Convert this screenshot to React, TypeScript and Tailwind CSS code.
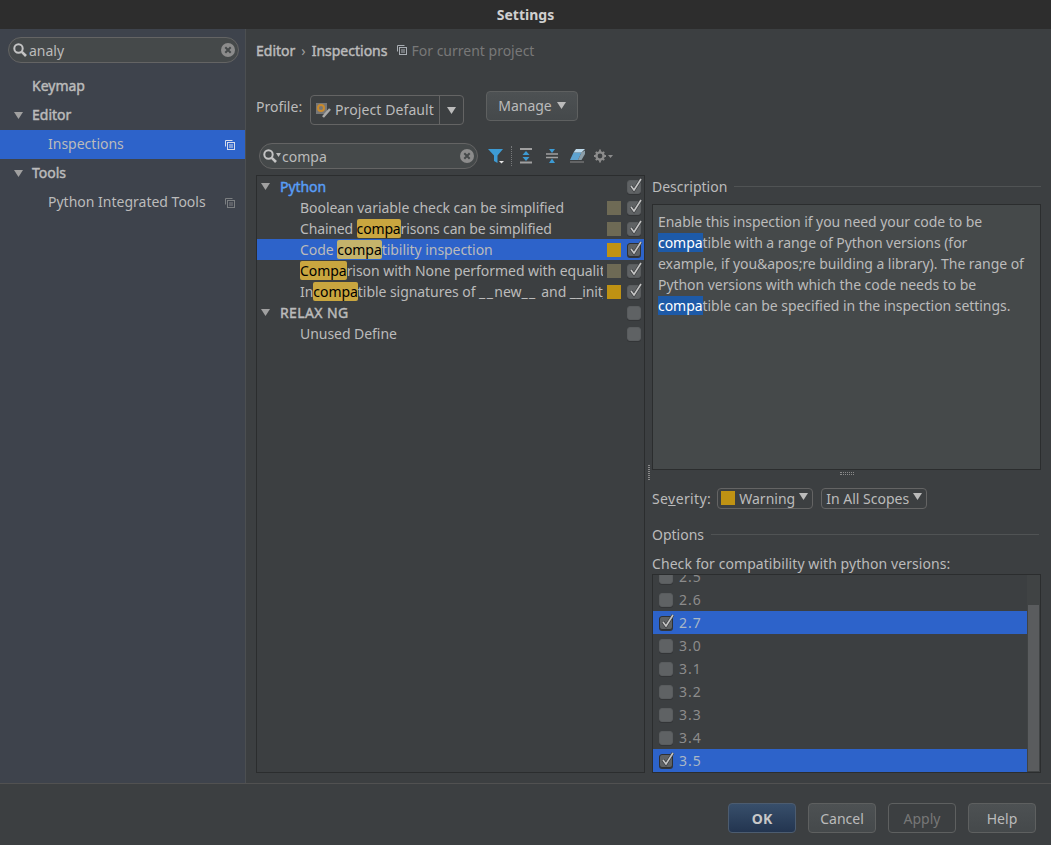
import { ReactNode } from 'react'

const fauxBold = '[-webkit-text-stroke:0.45px_currentColor]'

function Tri({ className = '' }: { className?: string }) {
  return (
    <svg width="9" height="7" viewBox="0 0 9 7" className={className}>
      <path d="M0 0h9L4.5 7z" fill="currentColor" />
    </svg>
  )
}

function SearchGlass() {
  return (
    <svg width="14" height="14" viewBox="0 0 14 14" fill="none" stroke="#c4c4c4" className="shrink-0">
      <circle cx="5.5" cy="5.5" r="4.2" strokeWidth="2" />
      <path d="M8.8 8.8l4.2 4.2" strokeWidth="2.6" />
    </svg>
  )
}

function ClearIcon() {
  return (
    <svg width="14" height="14" viewBox="0 0 14 14" className="shrink-0">
      <circle cx="7" cy="7" r="7" fill="#8c8c8c" />
      <path d="M4.3 4.3l5.4 5.4M9.7 4.3l-5.4 5.4" stroke="#45494a" strokeWidth="2" />
    </svg>
  )
}

function CopyIcon({ color }: { color: string }) {
  return (
    <svg width="10" height="10" viewBox="0 0 10 10" fill="none" stroke={color} className="shrink-0">
      <path d="M7.5 .5h-7v6" />
      <rect x="2.5" y="2.5" width="7" height="7" />
      <path d="M4 5h4M4 7h4" />
    </svg>
  )
}

function Check({ on, dark }: { on?: boolean; dark?: boolean }) {
  return (
    <span className={`relative block w-[14px] h-[14px] rounded-[3px] bg-[#5f6264] border ${dark ? 'border-[#2f3133]' : 'border-[#595c5e]'} shadow-[0_1px_0_#333537] shrink-0`}>
      {on && (
        <svg width="16" height="16" viewBox="0 0 16 16" fill="none" className="absolute left-0 -top-[4px]">
          <path d="M3 9l3 4L13 2" stroke="#3a3c3e" strokeWidth="3" />
          <path d="M3 9l3 4L13 2" stroke="#c4c4c4" strokeWidth="1.6" />
        </svg>
      )}
    </span>
  )
}

function Hl({ children, selected }: { children: ReactNode; selected?: boolean }) {
  return (
    <span className={`rounded-[2px] text-black ${selected ? 'bg-[#c4b36b]' : 'bg-[#c9a63f]'}`}>{children}</span>
  )
}

function Under() {
  return <span className="tracking-[1.4px]">__</span>
}

function SideRow({ label, bold, open, indent, copy, selected }: { label: string; bold?: boolean; open?: boolean; indent?: boolean; copy?: string; selected?: boolean }) {
  return (
    <div className={`h-[29px] flex items-center pr-[10px] ${selected ? 'bg-[#2d63ca]' : ''}`}>
      <span className="w-[32px] pl-[14px] shrink-0">{open && <Tri className="text-[#a0a0a0]" />}</span>
      <span className={`${bold ? fauxBold : ''} ${indent ? 'ml-[16px]' : ''} flex-1 -mt-[2px]`}>{label}</span>
      {copy && <CopyIcon color={copy} />}
    </div>
  )
}

function TreeRow({ children, sev, on, group, selected }: { children: ReactNode; sev?: string; on?: boolean; group?: boolean; selected?: boolean }) {
  return (
    <div className={`h-[21px] flex items-center pr-[3px] ${selected ? 'bg-[#2d63ca]' : ''}`}>
      {group ? (
        <span className="w-[23px] pl-[4px] shrink-0"><Tri className="text-[#a0a0a0]" /></span>
      ) : (
        <span className="w-[43px] shrink-0" />
      )}
      <span className="flex-1 min-w-0 whitespace-nowrap overflow-hidden tracking-[-0.05px]">{children}</span>
      {sev && <span className="w-[14px] h-[14px] ml-[4px] shrink-0" style={{ background: sev }} />}
      <span className="ml-[6px]"><Check on={on} dark={selected} /></span>
    </div>
  )
}

function VersionRow({ v, on }: { v: string; on?: boolean }) {
  return (
    <div className={`h-[23px] flex items-center pl-[6px] gap-[6px] text-[#8c8c8c] tracking-[1px] ${on ? 'bg-[#2d63ca] text-[#a9b7c6]' : ''}`}>
      <Check on={on} dark={on} />
      <span>{v}</span>
    </div>
  )
}

function FooterButton({ label, variant }: { label: string; variant?: 'ok' | 'off' }) {
  const look =
    variant === 'ok'
      ? `bg-gradient-to-b from-[#384f6b] to-[#233550] border-[#4c5c70] font-bold text-[#c8c8c8]`
      : variant === 'off'
        ? 'border-[#5e6060] text-[#777777]'
        : 'bg-gradient-to-b from-[#4d5153] to-[#45494b] border-[#5e6060]'
  return <button className={`w-[68px] h-[30px] rounded-[4px] border ${look}`}>{label}</button>
}

function Section({ title }: { title: string }) {
  return (
    <div className="flex items-center gap-[7px]">
      <span>{title}</span>
      <span className="flex-1 h-px bg-[#505354]" />
    </div>
  )
}

function Toolbar() {
  return (
    <div className="flex items-center ml-[10px] h-[20px]">
      <svg width="16" height="16" viewBox="0 0 16 16">
        <path d="M0 1h15L9.5 7.5V15L6 13V7.5z" fill="#3d9bd4" />
        <path d="M11 13h5l-2.5 2.5z" fill="#e6e6e6" />
      </svg>
      <span className="ml-[7px] h-[20px] border-l border-dotted border-[#77797a]" />
      <svg width="14" height="16" viewBox="0 0 14 16" className="ml-[7px]">
        <path d="M1 1h12M1 14.5h12" stroke="#a0a0a0" strokeWidth="2" fill="none" />
        <path d="M7 3l3.5 4h-7zM7 13l-3.5-4h7z" fill="#3d9bd4" />
      </svg>
      <svg width="14" height="16" viewBox="0 0 14 16" className="ml-[12px]">
        <path d="M1 6h12M1 9.5h12" stroke="#a0a0a0" strokeWidth="1.6" fill="none" />
        <path d="M7 5L4 1h6zM7 10.5l3 4.5H4z" fill="#3d9bd4" />
      </svg>
      <svg width="16" height="16" viewBox="0 0 16 16" className="ml-[11px]">
        <path d="M0 12L3.5 4.5h8L8 12z" fill="#5ea3d0" />
        <path d="M8 12l3.5-7.5L15 2.5V6l-3.500 6z" fill="#8c9ea8" />
        <path d="M3.500 4.500L6 1h9l-3.500 3.500z" fill="#bcd9ec" />
        <path d="M0 14h14" stroke="#8a8a8a" strokeWidth="1" />
      </svg>
      <svg width="20" height="14" viewBox="0 0 20 14" className="ml-[8px]">
        <circle cx="6" cy="7" r="3.6" fill="none" stroke="#8c8c8c" strokeWidth="2.4" />
        <path d="M6 .5v2.500M6 11v2.500M0 7h2.500M9.500 7H12M1.800 2.800l1.800 1.800M8.400 9.400l1.800 1.800M10.200 2.800L8.400 4.600M3.600 9.400l-1.800 1.800" stroke="#8c8c8c" strokeWidth="1.8" />
        <path d="M14 6h5l-2.500 3z" fill="#8c8c8c" />
      </svg>
    </div>
  )
}

export default function App() {
  return (
    <div className="w-[1051px] h-[845px] flex flex-col overflow-hidden bg-[#3c3f41] text-[#bbbbbb] text-[14px] font-['Noto_Sans',sans-serif]">
      {/* Title bar */}
      <div className="h-[29px] shrink-0 flex items-center justify-center bg-[#2d2d2d] text-[#d0d0d0] font-bold text-[14px]">Settings</div>

      <div className="h-[755px] shrink-0 flex border-b border-[#515151]">
        {/* Sidebar */}
        <div className="w-[246px] shrink-0 bg-[#3e434c] border-r border-[#4c4f51]">
          <div className="ml-[8px] w-[231px] mt-[8px] h-[26px] rounded-[13px] bg-[#45494a] border border-[#646464] flex items-center pl-[4px] pr-[3px]">
            <SearchGlass />
            <span className="flex-1 ml-[2px]">analy</span>
            <ClearIcon />
          </div>
          <div className="mt-[9px]">
            <SideRow label="Keymap" bold />
            <SideRow label="Editor" bold open />
            <SideRow label="Inspections" indent selected copy="#d5dcec" />
            <SideRow label="Tools" bold open />
            <SideRow label="Python Integrated Tools" indent copy="#7c7f81" />
          </div>
        </div>

        {/* Main */}
        <div className="flex-1 min-w-0 pl-[10px] pr-[10px] flex flex-col">
          <div className="h-[44px] flex items-center -mt-[1px]">
            <span className={fauxBold}>Editor</span>
            <span className="mx-[6px] text-[#a0a0a0]">›</span>
            <span className={fauxBold}>Inspections</span>
            <span className="ml-[10px] mr-[4px]"><CopyIcon color="#a8adb3" /></span>
            <span className="text-[#787878]">For current project</span>
          </div>

          <div className="h-[50px] flex items-start mt-[19px]">
            <span className="mt-[5px] w-[54px]">Profile:</span>
            <div className="mt-[4px] h-[30px] w-[154px] rounded-[4px] border border-[#646464] flex items-center">
              <svg width="17" height="17" viewBox="0 0 17 17" className="ml-[4px] shrink-0">
                <rect x="1" y="1" width="11" height="11" fill="#777" />
                <circle cx="6" cy="6" r="3" fill="none" stroke="#c98a2c" strokeWidth="2" />
                <path d="M15 7l-7 8" stroke="#a8a8a8" strokeWidth="2.5" />
              </svg>
              <span className="ml-[3px] flex-1 whitespace-nowrap -mt-[1px] tracking-[0.1px]">Project Default</span>
              <span className="w-[24px] h-full border-l border-[#646464] flex items-center justify-center">
                <Tri className="text-[#bbbbbb]" />
              </span>
            </div>
            <button className="ml-[22px] w-[92px] h-[30px] rounded-[4px] border border-[#5e6060] bg-gradient-to-b from-[#4d5153] to-[#45494b] flex items-center justify-center gap-[5px]">
              <span className="-mt-[1px]">Manage</span> <Tri className="text-[#bbbbbb] -mt-[1px]" />
            </button>
          </div>

          <div className="flex items-center mt-[2px] ml-[3px] h-[26px]">
            <div className="w-[219px] h-[26px] rounded-[13px] bg-[#45494a] border border-[#646464] flex items-center pl-[3px] pr-[3px]">
              <SearchGlass />
              <svg width="5" height="4" viewBox="0 0 5 4" className="-ml-[1px] -mt-[2px] shrink-0"><path d="M0 0h5L2.500 4z" fill="#bbbbbb" /></svg>
              <span className="flex-1 ml-[1px]">compa</span>
              <ClearIcon />
            </div>
            <Toolbar />
          </div>

          <div className="flex mt-[6px] h-[598px]">
            {/* Tree */}
            <div className="w-[389px] shrink-0 border border-[#2b2d2e]">
              <TreeRow group on><span className={`${fauxBold} text-[#589df6]`}>Python</span></TreeRow>
              <TreeRow sev="#6e6a55" on>Boolean variable check can be simplified</TreeRow>
              <TreeRow sev="#6e6a55" on><span className="tracking-[-0.15px]">Chained <Hl>compa</Hl>risons can be simplified</span></TreeRow>
              <TreeRow sev="#bf9213" on selected>Code <Hl selected>compa</Hl>tibility inspection</TreeRow>
              <TreeRow sev="#6e6a55" on><Hl>Compa</Hl>rison with None performed with equality operators</TreeRow>
              <TreeRow sev="#bf9213" on>In<Hl>compa</Hl>tible signatures of <Under />new<Under /> <span className="ml-[1px]">and</span> __init__</TreeRow>
              <TreeRow group><span className={`${fauxBold} tracking-[0.4px]`}>RELAX NG</span></TreeRow>
              <TreeRow>Unused Define</TreeRow>
            </div>

            {/* Splitter */}
            <div className="w-[7px] shrink-0 flex flex-col items-center pt-[290px]">
              <span className="w-[2px] h-[15px] border-x border-dotted border-[#8a8a8a]" />
            </div>

            {/* Details */}
            <div className="flex-1 min-w-0 flex flex-col">
              <div className="h-[29px] flex flex-col justify-center pb-[6px]"><Section title="Description" /></div>
              <div className="h-[267px] bg-[#45494a] border border-[#2b2d2e] pl-[5px] pr-[10px] pt-[6px] leading-[21px] tracking-[-0.05px]">
                Enable this inspection if you need your code to be <span className="bg-[#1d5aa8] text-white">compa</span>tible with a range of Python versions (for example, if you&amp;apos;re building a library). The range of Python versions with which the code needs to be <span className="bg-[#1d5aa8] text-white">compa</span>tible can be specified in the inspection settings.
              </div>
              <div className="h-[6px] flex justify-center items-center">
                <span className="w-[14px] h-[3px] border-y border-dotted border-[#8a8a8a]" />
              </div>
              <div className="flex items-center h-[22px] mt-[11px]">
                <span className="mr-[6px] tracking-[0.4px]">Se<span className="underline">v</span>erity:</span>
                <div className="h-[21px] w-[96px] rounded-[4px] border border-[#646464] flex items-center pl-[3px]">
                  <span className="w-[14px] h-[14px] bg-[#bf9213] mr-[4px] shrink-0" />
                  Warning
                  <Tri className="text-[#bbbbbb] ml-[4px] -mt-[3px]" />
                </div>
                <div className="ml-[8px] h-[21px] w-[106px] rounded-[4px] border border-[#646464] flex items-center pl-[4px]">
                  In All Scopes
                  <Tri className="text-[#bbbbbb] ml-[4px] -mt-[3px]" />
                </div>
              </div>
              <div className="mt-[15px] h-[20px] pr-[2px]"><Section title="Options" /></div>
              <div className="mt-[10px] h-[20px] leading-[20px] tracking-[0.07px]">Check for compatibility with python versions:</div>
              <div className="h-[199px] border border-[#2b2d2e] flex overflow-hidden">
                <div className="flex-1 min-w-0 -mt-[10px]">
                  <VersionRow v="2.5" />
                  <VersionRow v="2.6" />
                  <VersionRow v="2.7" on />
                  <VersionRow v="3.0" />
                  <VersionRow v="3.1" />
                  <VersionRow v="3.2" />
                  <VersionRow v="3.3" />
                  <VersionRow v="3.4" />
                  <VersionRow v="3.5" on />
                </div>
                <div className="w-[13px] shrink-0 bg-[#404344] pt-[30px] pl-[1px] pb-[1px] pr-[1px]">
                  <div className="h-full bg-[#5a5c5e]" />
                </div>
              </div>
            </div>
          </div>
        </div>
      </div>

      {/* Footer */}
      <div className="flex-1 flex items-start justify-end gap-[12px] pt-[19px] pr-[15px]">
        <FooterButton label="OK" variant="ok" />
        <FooterButton label="Cancel" />
        <FooterButton label="Apply" variant="off" />
        <FooterButton label="Help" />
      </div>
    </div>
  )
}
